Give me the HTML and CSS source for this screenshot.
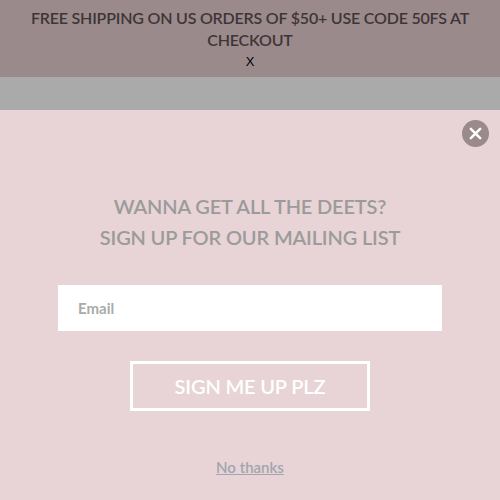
FILE: index.html
```html
<!DOCTYPE html>
<html>
<head>
<meta charset="utf-8">
<link rel="stylesheet" href="styles.css">
</head>
<body>
<div class="topbar">
  <p class="promo">FREE SHIPPING ON US ORDERS OF $50+ USE CODE 50FS AT CHECKOUT</p>
  <span class="promo-close">x</span>
</div>
<div class="strip"></div>
<div class="modal">
  <button class="modal-close" aria-label="Close">
    <svg width="26" height="26" viewBox="0 0 26 26"><circle cx="13" cy="13" r="13" fill="#9a8a8c"/><path d="M8.5 8.5 L17.5 17.5 M17.5 8.5 L8.5 17.5" stroke="#fff" stroke-width="2.4" stroke-linecap="round"/></svg>
  </button>
  <h2 class="title">WANNA GET ALL THE DEETS?<br>SIGN UP FOR OUR MAILING LIST</h2>
  <input class="email" type="text" placeholder="Email">
  <button class="submit">SIGN ME UP PLZ</button>
  <a class="nothanks" href="#">No thanks</a>
</div>
</body>
</html>
```
FILE: styles.css
```css
* { box-sizing: border-box; }
html, body { margin: 0; padding: 0; }
body { font-family: Lato, "Open Sans", sans-serif; background: #e8d3d6; }
.topbar {
  background: #9a8a8c;
  height: 77px;
  display: flex;
  flex-direction: column;
  align-items: center;
  padding-top: 7px;
}
.promo {
  margin: 0;
  width: 460px;
  text-align: center;
  font-size: 16px;
  line-height: 22px;
  color: #3e3536;
  font-weight: 600;
  letter-spacing: -0.2px;
}
.promo-close {
  font-family: "Liberation Sans", Arial, sans-serif;
  font-size: 13px;
  line-height: 18px;
  color: #000;
  text-transform: uppercase;
  margin-top: 2px;
}
.strip { height: 33px; background: #aaaaaa; }
.modal {
  position: relative;
  height: 390px;
  display: flex;
  flex-direction: column;
  align-items: center;
  padding-top: 81px;
}
.modal-close {
  position: absolute;
  top: 10px;
  right: 11px;
  width: 27px;
  height: 27px;
  padding: 0;
  border: 0;
  background: none;
  display: block;
}
.modal-close svg { display: block; width: 27px; height: 27px; }
.title {
  margin: 0;
  font-size: 20px;
  line-height: 31px;
  font-weight: 600;
  letter-spacing: -0.15px;
  color: #9b9b9b;
  text-align: center;
}
.email {
  margin-top: 32px;
  width: 384px;
  height: 46px;
  border: 0;
  background: #fff;
  padding: 0 20px;
  font-family: Lato, sans-serif;
  font-size: 15px;
  font-weight: 700;
  outline: none;
}
.email::placeholder { color: #aaaaaa; }
.submit {
  margin-top: 30px;
  width: 240px;
  height: 50px;
  border: 3px solid #fff;
  background: transparent;
  color: #fff;
  font-family: Lato, sans-serif;
  font-size: 20px;
  font-weight: 600;
  letter-spacing: -0.15px;
}
.nothanks {
  margin-top: 47px;
  font-size: 15px;
  font-weight: 600;
  color: #a0a6ad;
  text-decoration: underline;
}
```
